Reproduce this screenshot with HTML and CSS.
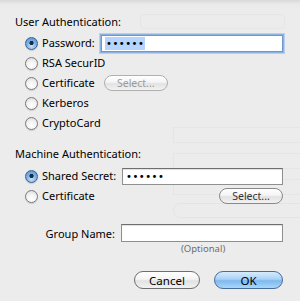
FILE: index.html
```html
<!DOCTYPE html>
<html>
<head>
<meta charset="utf-8">
<link rel="stylesheet" href="styles.css">
</head>
<body>
<div class="ghost" aria-hidden="true">
  <div class="g-popup"></div>
  <div class="g-box g-conf"></div>
  <div class="g-box g-next"></div>
  <div class="g-box g-next"></div>
  <div class="g-btn"></div>
</div>
<div class="sheet">
  <div class="heading">User Authentication:</div>
  <div class="group">
    <div class="row">
      <span class="radio on"></span><span class="lbl">Password:</span>
      <span class="field focus pw"><span class="sel">••••••</span></span>
    </div>
    <div class="row"><span class="radio"></span><span class="lbl">RSA SecurID</span></div>
    <div class="row">
      <span class="radio"></span><span class="lbl">Certificate</span>
      <span class="btn small disabled cert1">Select...</span>
    </div>
    <div class="row"><span class="radio"></span><span class="lbl">Kerberos</span></div>
    <div class="row"><span class="radio"></span><span class="lbl">CryptoCard</span></div>
  </div>

  <div class="heading machine">Machine Authentication:</div>
  <div class="group g2">
    <div class="row">
      <span class="radio on"></span><span class="lbl">Shared Secret:</span>
      <span class="field secret">••••••</span>
    </div>
    <div class="row">
      <span class="radio"></span><span class="lbl">Certificate</span>
      <span class="btn small cert2">Select...</span>
    </div>
  </div>

  <div class="grouprow">
    <span class="glabel">Group Name:</span>
    <span class="field gname"></span>
  </div>
  <div class="optional">(Optional)</div>

  <div class="buttons">
    <span class="btn big cancel">Cancel</span>
    <span class="btn big ok">OK</span>
  </div>
</div>
</body>
</html>
```

FILE: styles.css
```css
html, body {
  margin: 0;
  padding: 0;
}
body {
  width: 300px;
  height: 301px;
  overflow: hidden;
  background: linear-gradient(#d9d9d9 0px, #e9e9e9 4px, #ececec 8px, #ececec 100%);
  font-family: "Noto Sans", "DejaVu Sans", sans-serif;
  font-size: 11px;
  color: #000;
  display: grid;
  grid-template-columns: 300px;
  grid-template-rows: 301px;
}
.ghost, .sheet {
  grid-area: 1 / 1;
  min-width: 0;
}

/* faint outlines of the window behind the sheet */
.ghost {
  display: flex;
  flex-direction: column;
  padding-top: 14px;
  overflow: hidden;
}
.g-popup {
  margin-left: 140px;
  width: 145px;
  height: 15px;
  box-sizing: border-box;
  border: 1px solid #e5e5e5;
  border-radius: 4px;
}
.g-box {
  margin-left: 173px;
  width: 140px;
  height: 16px;
  box-sizing: border-box;
  border: 1px solid #e5e5e5;
  flex: none;
}
.g-conf {
  margin-top: 98px;
}
.g-next {
  margin-top: 10px;
}
.g-btn {
  margin-top: 8px;
  margin-left: 173px;
  width: 140px;
  height: 15px;
  box-sizing: border-box;
  border: 1px solid #e4e4e4;
  border-radius: 8px;
  flex: none;
}

.sheet {
  padding: 14px 17px 0 15px;
  display: flex;
  flex-direction: column;
}
.heading {
  height: 16px;
  line-height: 16px;
  white-space: nowrap;
}
.machine {
  margin-top: 13px;
}
.group {
  margin-top: 3px;
  display: flex;
  flex-direction: column;
  padding-left: 10px;
}
.g2 {
  margin-top: 4px;
}
.row {
  height: 20px;
  display: flex;
  align-items: center;
}
.radio {
  width: 11px;
  height: 11px;
  border-radius: 50%;
  border: 1px solid #7b7b7b;
  background: radial-gradient(circle at 50% 70%, #ffffff 0%, #f2f2f2 50%, #d2d2d2 100%);
  box-shadow: 0 1px 1px rgba(0,0,0,0.15);
  flex: none;
  margin-right: 4px;
}
.radio.on {
  border-color: #3d5f8f;
  background: radial-gradient(circle at 50% 45%, #1f2c40 0 1.8px, transparent 2.4px),
              radial-gradient(circle at 50% 75%, #c4e2fb 0%, #7fb4e8 45%, #4f8fd6 100%);
}
.lbl {
  line-height: 16px;
  white-space: nowrap;
  flex: none;
}
.field {
  display: inline-flex;
  align-items: center;
  background: #fff;
  border: 1px solid #8f8f8f;
  border-top-color: #6e6e6e;
  box-sizing: border-box;
  box-shadow: inset 0 1px 1px rgba(0,0,0,0.12);
  font-family: "DejaVu Sans", sans-serif;
  font-size: 10px;
  letter-spacing: 0.5px;
  flex: none;
}
.pw {
  margin-left: auto;
  width: 182px;
  height: 17px;
  padding-left: 3px;
}
.focus {
  border-color: #6f98c8;
  box-shadow: 0 0 0 1px #8db3e2, 0 0 0 2px #b7d0ef;
}
.sel {
  background: #b5d5ff;
  padding: 0 1px;
  line-height: 13px;
}
.secret {
  margin-left: auto;
  width: 161px;
  height: 17px;
  padding-left: 3px;
}
.btn {
  display: inline-flex;
  align-items: center;
  justify-content: center;
  box-sizing: border-box;
  border-radius: 9px;
  border: 1px solid #8a8a8a;
  background: linear-gradient(#ffffff 0%, #f4f4f4 45%, #e2e2e2 55%, #f2f2f2 100%);
  white-space: nowrap;
  flex: none;
}
.small {
  height: 16px;
  width: 64px;
  font-size: 10.5px;
  color: #333;
}
.disabled {
  color: #9a9a9a;
  border-color: #b0b0b0;
}
.cert1 {
  margin-left: 9px;
}
.cert2 {
  margin-left: auto;
}
.grouprow {
  margin-top: 17px;
  height: 20px;
  display: flex;
  align-items: center;
}
.glabel {
  width: 100px;
  text-align: right;
  padding-right: 6px;
  white-space: nowrap;
}
.gname {
  width: 162px;
  height: 18px;
}
.optional {
  height: 12px;
  line-height: 12px;
  font-size: 9.5px;
  color: #6d6d6d;
  padding-left: 166px;
}
.buttons {
  margin-top: 16px;
  display: flex;
  justify-content: flex-end;
  gap: 14px;
}
.big {
  height: 18px;
  font-size: 11.5px;
  border-color: #6e6e6e;
}
.cancel {
  width: 66px;
}
.ok {
  width: 69px;
  border-color: #4a6a9a;
  background: linear-gradient(#d7ebfc 0%, #a8d2f7 45%, #7fb9ef 55%, #a7d7fb 100%);
}
```
